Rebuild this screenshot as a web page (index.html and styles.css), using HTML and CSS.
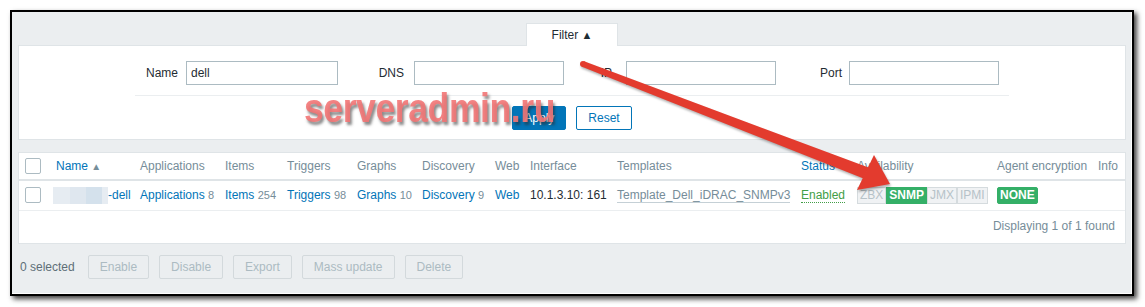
FILE: index.html
```html
<!DOCTYPE html>
<html lang="en">
<head>
  <meta charset="UTF-8" />
  <title>Hosts</title>
  <link rel="stylesheet" href="styles.css">
</head>
<body>

  <div class="frame">
    <div class="filter">
      <div class="filter-tab">Filter <span class="tri">&#9650;</span></div>
      <div class="filter-body">
        <div class="filter-fields">
          <label class="lbl-name">Name</label><input class="inp" type="text" value="dell">
          <label class="lbl-dns">DNS</label><input class="inp" type="text">
          <label class="lbl-ip">IP</label><input class="inp" type="text">
          <label class="lbl-port">Port</label><input class="inp" type="text">
        </div>
        <div class="filter-buttons">
          <button class="btn btn-main">Apply</button>
          <button class="btn btn-alt">Reset</button>
        </div>
      </div>
    </div>

    <div class="list">
      <table>
        <colgroup>
          <col style="width:32px"><col style="width:84px"><col style="width:85px"><col style="width:62px">
          <col style="width:70px"><col style="width:65px"><col style="width:73px"><col style="width:35px">
          <col style="width:87px"><col style="width:184px"><col style="width:56px"><col style="width:140px">
          <col style="width:101px"><col style="width:32px">
        </colgroup>
        <thead>
          <tr>
            <th class="chk-cell"><span class="chk"></span></th>
            <th><a class="link">Name</a> <span class="sort">&#9650;</span></th>
            <th>Applications</th>
            <th>Items</th>
            <th>Triggers</th>
            <th>Graphs</th>
            <th>Discovery</th>
            <th>Web</th>
            <th>Interface</th>
            <th>Templates</th>
            <th><a class="link">Status</a></th>
            <th>Availability</th>
            <th>Agent encryption</th>
            <th>Info</th>
          </tr>
        </thead>
        <tbody>
          <tr>
            <td class="chk-cell"><span class="chk"></span></td>
            <td><span class="blur"></span><a class="link">-dell</a></td>
            <td><a class="link">Applications</a> <span class="cnt">8</span></td>
            <td><a class="link">Items</a> <span class="cnt">254</span></td>
            <td><a class="link">Triggers</a> <span class="cnt">98</span></td>
            <td><a class="link">Graphs</a> <span class="cnt">10</span></td>
            <td><a class="link">Discovery</a> <span class="cnt">9</span></td>
            <td><a class="link">Web</a></td>
            <td class="iface">10.1.3.10: 161</td>
            <td><a class="tpl">Template_Dell_iDRAC_SNMPv3</a></td>
            <td><a class="enabled">Enabled</a></td>
            <td>
              <span class="avail">
                <span class="tag tag-grey">ZBX</span><span class="tag tag-green">SNMP</span><span class="tag tag-grey">JMX</span><span class="tag tag-grey">IPMI</span>
              </span>
            </td>
            <td><span class="tag tag-green tag-round">NONE</span></td>
            <td></td>
          </tr>
        </tbody>
      </table>
      <div class="paging">Displaying 1 of 1 found</div>
    </div>

    <div class="actions">
      <span class="selected">0 selected</span>
      <button class="btn btn-off">Enable</button>
      <button class="btn btn-off">Disable</button>
      <button class="btn btn-off">Export</button>
      <button class="btn btn-off">Mass update</button>
      <button class="btn btn-off">Delete</button>
    </div>
  </div>

  <div class="watermark">serveradmin.ru</div>

  <svg class="arrow" width="1145" height="307" viewBox="0 0 1145 307">
    <circle cx="583" cy="64" r="3" fill="#e33b2e"/>
    <polygon points="581.9,66.8 584.1,61.2 868.5,167.6 863.5,178.4" fill="#e33b2e"/>
    <polygon points="874,155 890,184 857,190" fill="#e33b2e"/>
  </svg>

</body>
</html>
```

FILE: styles.css
```css
/* Base */
* { margin: 0; padding: 0; box-sizing: border-box; }
body { font-family: 'Liberation Sans', Arial, sans-serif; font-size: 12px; color: #1f2c33; background: #fff; position: relative; width: 1145px; height: 307px; overflow: hidden; }

/* Screenshot frame */
.frame {
  margin: 10px 0 0 10px;
  width: 1124px;
  background: #ebeef0;
  border: 2px solid #000;
  padding: 10px 6px 15px 6px;
  box-shadow: inset -1px -1px 0 #fff, 3px 3px 5px rgba(0,0,0,0.75);
}

/* Filter */
.filter-tab {
  width: 92px; height: 23px; margin: 0 auto;
  background: #fff; border: 1px solid #dfe4e7; border-bottom: none;
  text-align: center; line-height: 23px; color: #1f2c33;
  position: relative; top: 1px;
}
.filter-tab .tri { font-size: 11px; vertical-align: 0; }
.filter-body { background: #fff; border: 1px solid #dfe4e7; height: 95px; padding-top: 15px; }
.filter-fields { width: 874px; margin: 0 auto; display: flex; align-items: center; padding-bottom: 10px; border-bottom: 1px solid #ebeef0; }
.filter-fields label { text-align: right; padding-right: 8px; }
.lbl-name { width: 51px; }
.lbl-dns { width: 76px; padding-right: 10px !important; }
.lbl-ip { width: 62px; padding-right: 14px !important; }
.lbl-port { width: 73px; padding-right: 7px !important; }
.inp { width: 150px; height: 24px; border: 1px solid #acbbc2; padding: 0 4px; font: inherit; color: #1f2c33; }
.lbl-name + .inp { width: 152px; }
.filter-buttons { display: flex; justify-content: center; gap: 10px; padding-top: 10px; }

/* Buttons */
.btn { height: 24px; padding: 0 11px; font: inherit; border-radius: 2px; border: 1px solid #0275b8; }
.btn-main { background: #0275b8; color: #fff; }
.btn-alt { background: #fff; color: #0275b8; }
.btn-off { background: #ebeef0; border-color: #d3d9dc; color: #acbbc2; }

/* List */
.list { background: #fff; border: 1px solid #dfe4e7; margin-top: 12px; }
table { width: 100%; border-collapse: collapse; table-layout: fixed; }
th, td { text-align: left; white-space: nowrap; padding: 0 5px; }
th { font-weight: normal; color: #768d99; height: 27px; border-bottom: 2px solid #dfe4e7; }
td { height: 30px; border-bottom: 1px solid #ebeef0; }
.chk-cell { padding-left: 6px; }
.chk { display: block; width: 16px; height: 16px; border: 1px solid #acbbc2; border-radius: 2px; background: #fff; }
.link { color: #0275b8; }
.sort { font-size: 10px; color: #768d99; }
.cnt { color: #768d99; font-size: 11px; }
.iface { color: #1f2c33; }
.tpl { color: #768d99; border-bottom: 1px solid #c5d0d6; }
.enabled { color: #429e47; border-bottom: 1px dotted #429e47; }
.blur {
  display: inline-block; width: 55px; height: 17px; margin-left: -3px; vertical-align: middle;
  background: linear-gradient(to right, #e6ecf2 0, #e6ecf2 17px, #dfe7ef 17px, #dfe7ef 33px, #d4e1ec 33px, #d4e1ec 49px, #e6ecf2 49px);
}
.avail { display: inline-flex; }
.tag { display: inline-block; height: 17px; line-height: 15px; padding: 0 2px; border: 1px solid; }
.tag-grey { background: #f0f2f4; border-color: #d5dbde; color: #b6c2c8; }
.tag-green { background: #34af67; border-color: #34af67; color: #fff; font-weight: bold; }
.tag-round { border-radius: 2px; }
.paging { height: 32px; line-height: 31px; text-align: right; padding-right: 10px; color: #768d99; }

/* Action bar */
.actions { display: flex; align-items: center; gap: 10px; margin-top: 11px; padding-left: 2px; }
.selected { color: #5e6e77; margin-right: 3px; }

/* Overlays from the screenshot */
.watermark {
  position: absolute; left: 304px; top: 88px;
  font-size: 40px; line-height: 40px; font-weight: bold; letter-spacing: -0.5px;
  color: rgba(242, 118, 118, 0.9);
  text-shadow: 2px 3px 3px rgba(40,40,40,0.55);
  transform: scaleX(0.89); transform-origin: left top;
}
.arrow { position: absolute; left: 0; top: 0; pointer-events: none; filter: drop-shadow(1px 2px 1px rgba(0,0,0,0.3)); }
```
